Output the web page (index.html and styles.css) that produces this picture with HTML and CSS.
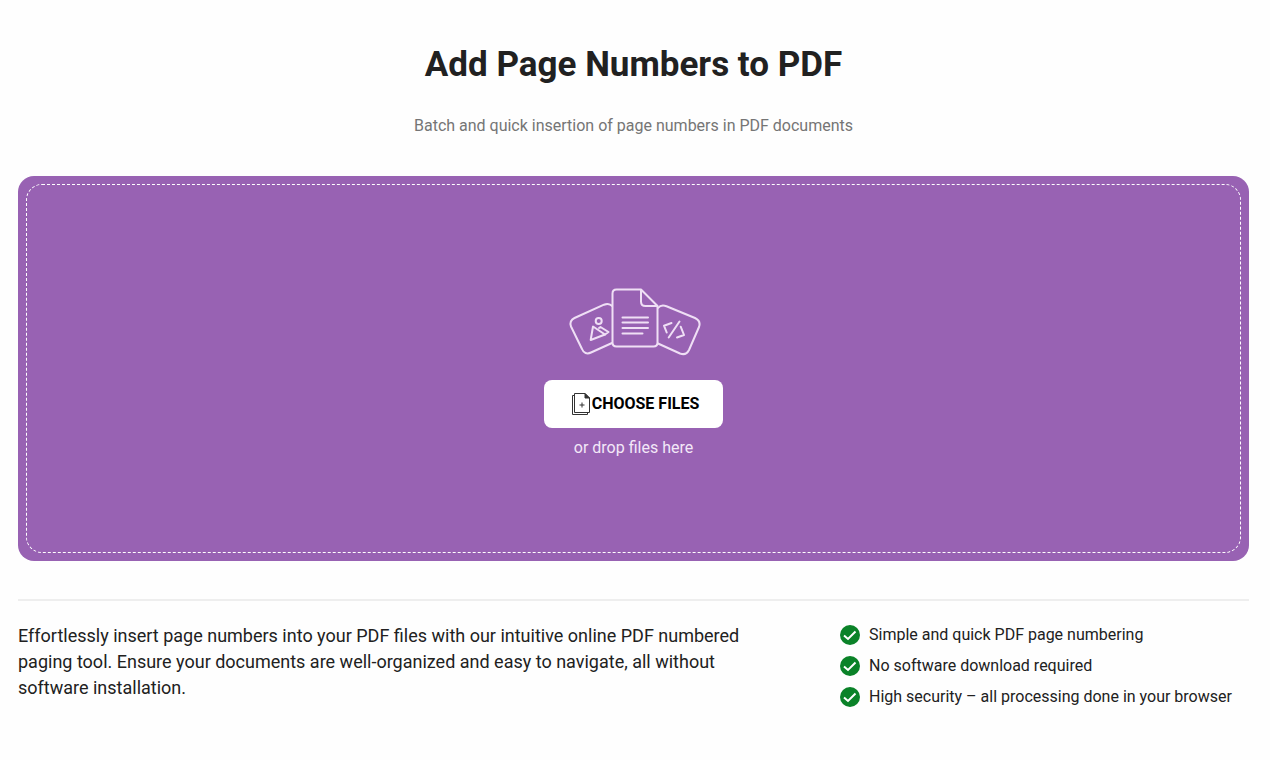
FILE: index.html
```html
<!DOCTYPE html>
<html lang="en">
<head>
    <meta charset="UTF-8">
    <meta name="viewport" content="width=device-width, initial-scale=1.0">
    <title>Add Page Numbers to PDF</title>
    <link rel="stylesheet" href="styles.css">
</head>
<body>
    <main class="container">
        <header class="page-header">
            <h1>Add Page Numbers to PDF</h1>
            <p>Batch and quick insertion of page numbers in PDF documents</p>
        </header>

        <!-- Upload area -->
        <section class="upload">
            <div class="drop-zone" id="dropZone">
                <svg class="drop-art" viewBox="12 10 134 70" aria-hidden="true">
                    <!-- Picture card -->
                    <path d="M57 30C55.500 28 52 27.500 49 28.700L19.500 42C16 43.500 14.500 47 16 50.500L27 73C28.500 77 32 78.500 36 76.500L57 67"/>
                    <circle cx="43.700" cy="45" r="3"/>
                    <path d="M38 50.500L35.700 64L50 58.500Z"/>
                    <path d="M44 52L45.500 51L53.500 56L50 58.500"/>
                    <!-- Code card -->
                    <path d="M103 32C105 29.500 108 28.800 111.500 30.200L140 42C144 44 145.500 47 144 51L134 74C132 78 129 79 125 77.500L103 67.500"/>
                    <path d="M116.500 47L109 49.700L111.700 56.500M124.500 45.500L113.700 61.500M125.700 50.700L129 59L122 61.500"/>
                    <!-- Document -->
                    <path d="M86 13.500H61.500Q57.500 13.500 57.500 17.500V66.500Q57.500 70.500 61.500 70.500H98.500Q102.500 70.500 102.500 66.500V30L86 13.500V25.500Q86 30 90.500 30H102.500"/>
                    <path d="M67.500 41.500H93M67.500 46.500H93M67.500 52H93M67.500 57.500H87.500"/>
                </svg>
                <input type="file" id="pdfFiles" accept=".pdf" aria-label="PDF files" multiple hidden>
                <button type="button" class="choose-btn" id="chooseBtn">
                    <svg class="choose-icon" viewBox="0 0 18 22" aria-hidden="true">
                        <path d="M2.500 .5H13L17.500 5V19.500H2.500Z"/>
                        <path d="M2.500 2.500H.5V21.500H15.500V19.500"/>
                        <path class="fold" d="M13 .5V5H17.500Z"/>
                        <path d="M10 9.500V14.500M7.500 12H12.500"/>
                    </svg>
                    CHOOSE FILES
                </button>
                <p>or drop files here</p>
            </div>
        </section>

        <!-- Description and features -->
        <section class="details">
            <p class="description">Effortlessly insert page numbers into your PDF files with our intuitive online PDF numbered paging tool. Ensure your documents are well-organized and easy to navigate, all without software installation.</p>
            <ul class="features">
                <li>
                    <svg viewBox="0 0 20 20" aria-hidden="true"><circle cx="10" cy="10" r="10"/><path d="M4 10.500L8 14L15.500 6.500"/></svg>
                    Simple and quick PDF page numbering
                </li>
                <li>
                    <svg viewBox="0 0 20 20" aria-hidden="true"><circle cx="10" cy="10" r="10"/><path d="M4 10.500L8 14L15.500 6.500"/></svg>
                    No software download required
                </li>
                <li>
                    <svg viewBox="0 0 20 20" aria-hidden="true"><circle cx="10" cy="10" r="10"/><path d="M4 10.500L8 14L15.500 6.500"/></svg>
                    High security – all processing done in your browser
                </li>
            </ul>
        </section>
    </main>

    <script>
        const fileInput = document.getElementById('pdfFiles');
        const chooseBtn = document.getElementById('chooseBtn');
        const dropZone = document.getElementById('dropZone');

        chooseBtn.addEventListener('click', () => fileInput.click());

        dropZone.addEventListener('dragover', (e) => e.preventDefault());

        // Take dropped files into the input
        dropZone.addEventListener('drop', (e) => {
            e.preventDefault();
            fileInput.files = e.dataTransfer.files;
        });
    </script>
</body>
</html>
```
FILE: styles.css
```css
* {
    box-sizing: border-box;
}
body {
    font-family: Roboto, Arial, sans-serif;
    margin: 0;
    color: #212121;
    background-color: #fefefe;
}
h1, p, ul {
    margin: 0;
    padding: 0;
}
.container {
    padding: 40px 21px 48px 18px;
}
.page-header {
    text-align: center;
    margin-bottom: 38px;
}
h1 {
    font-size: 35px;
    line-height: 50px;
    margin-bottom: 24px;
}
.page-header p {
    font-size: 16px;
    line-height: 24px;
    color: #757575;
}
.upload {
    padding: 8px;
    background-color: #9862b3;
    border-radius: 16px;
}
.drop-zone {
    display: flex;
    flex-direction: column;
    align-items: center;
    justify-content: center;
    min-height: 369px;
    padding-top: 8px;
    border: 1px dashed #fff;
    border-radius: 16px;
}
.drop-art {
    width: 134px;
    height: 70px;
    margin-bottom: 24px;
    fill: none;
    stroke: #efdff5;
    stroke-width: 2;
    stroke-linecap: round;
    stroke-linejoin: round;
}
.choose-btn {
    display: flex;
    align-items: center;
    gap: 2px;
    height: 48px;
    padding: 0 24px 0 28px;
    margin-bottom: 8px;
    border: none;
    border-radius: 8px;
    background-color: #fff;
    color: #000;
    font-family: inherit;
    font-size: 16px;
    font-weight: bold;
    cursor: pointer;
}
.choose-icon {
    width: 18px;
    height: 22px;
    fill: none;
    stroke: #333;
}
.choose-icon .fold {
    fill: #333;
}
.drop-zone p {
    font-size: 16px;
    line-height: 24px;
    color: #f3e8f8;
}
.details {
    display: grid;
    grid-template-columns: 2fr 1fr;
    column-gap: 4px;
    margin-top: 38px;
    padding-top: 22px;
    border-top: 2px solid #eee;
}
.description {
    max-width: 730px;
    font-size: 18px;
    line-height: 26px;
}
.features {
    display: flex;
    flex-direction: column;
    gap: 7px;
    list-style: none;
}
.features li {
    display: flex;
    align-items: center;
    gap: 9px;
    font-size: 16px;
    line-height: 24px;
    white-space: nowrap;
}
.features svg {
    width: 20px;
    height: 20px;
    flex: none;
}
.features circle {
    fill: #0a8228;
}
.features path {
    fill: none;
    stroke: #fff;
    stroke-width: 2;
}
```
